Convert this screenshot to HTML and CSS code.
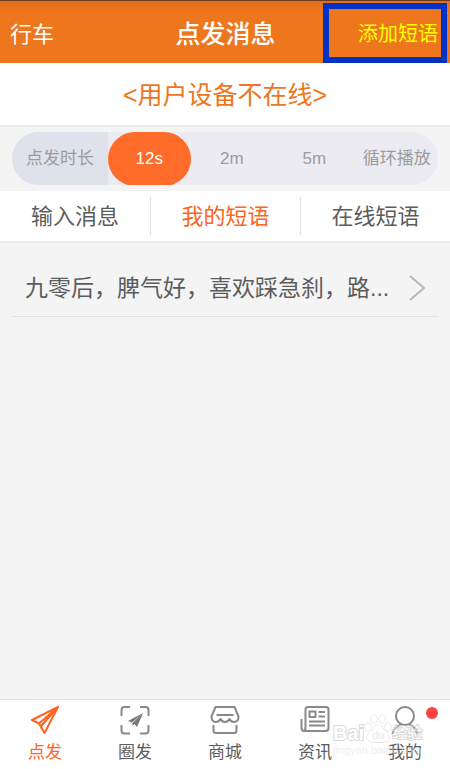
FILE: index.html
```html
<!DOCTYPE html>
<html lang="zh-CN">
<head>
<meta charset="utf-8">
<meta name="viewport" content="width=device-width, initial-scale=1">
<title>点发消息</title>
<link rel="stylesheet" href="styles.css">
</head>
<body>
<div class="app">
  <header class="topbar">
    <a class="topbar-back" href="#">行车</a>
    <h1 class="topbar-title">点发消息</h1>
    <button class="topbar-add" type="button">添加短语</button>
  </header>
  <p class="status">&lt;用户设备不在线&gt;</p>
  <section class="duration">
    <div class="pill">
      <span class="pill-label">点发时长</span>
      <button class="pill-option pill-option-active" type="button">12s</button>
      <button class="pill-option" type="button">2m</button>
      <button class="pill-option" type="button">5m</button>
      <button class="pill-option" type="button">循环播放</button>
    </div>
  </section>
  <nav class="tabs">
    <button class="tab" type="button">输入消息</button>
    <button class="tab tab-active" type="button">我的短语</button>
    <button class="tab" type="button">在线短语</button>
  </nav>
  <main class="phrases">
    <a class="phrase" href="#">
      <span class="phrase-text">九零后，脾气好，喜欢踩急刹，路...</span>
      <svg class="phrase-arrow" viewBox="0 0 16 26"><path d="M1 1L15 13L1 25"/></svg>
    </a>
  </main>
  <nav class="bottom">
    <a class="item item-active" href="#">
      <svg class="icon" viewBox="0 0 30 30"><path d="M28 2L2 15L9 18.5L14.500 28ZM28 2L9 18.500M28 2L11.500 20.500V24"/></svg>
      <span>点发</span>
    </a>
    <a class="item" href="#">
      <svg class="icon" viewBox="0 0 30 30"><path d="M1.500 11V5Q1.500 2 4.500 2H10M20 2H25.500Q28.500 2 28.500 5V11M28.500 20V25.500Q28.500 28.500 25.500 28.500H20M10 28.500H4.500Q1.500 28.500 1.500 25.500V20"/><path class="solid" d="M23 8L8 16L12 17.500ZM23 8L12.500 18V21L14.500 19L17 22Z"/></svg>
      <span>圈发</span>
    </a>
    <a class="item" href="#">
      <svg class="icon" viewBox="0 0 30 30"><path d="M5.500 2H24.500L28.500 11.500Q28.500 17 24 17Q21 17 19.500 14Q18 17 15 17Q12 17 10.500 14Q9 17 6 17Q1.500 17 1.500 11.500ZM6.500 10H23.500M3.500 20V25.500Q3.500 28 6 28H24Q26.500 28 26.500 25.500V20"/></svg>
      <span>商城</span>
    </a>
    <a class="item" href="#">
      <svg class="icon" viewBox="0 0 30 30"><path d="M5.500 22V4.500Q5.500 2 8 2H26Q28.500 2 28.500 4.500V23Q28.500 26 25.500 26H4.500Q1.500 26 1.500 23V14M5.500 22Q5.500 26 3.500 26M9.500 6.500H15.500V12H9.500ZM18.500 7H25M18.500 11.500H25M9 16.500H25M9 20.500H25"/></svg>
      <span>资讯</span>
    </a>
    <a class="item" href="#">
      <svg class="icon" viewBox="0 0 30 30"><circle cx="15" cy="11" r="9"/><path d="M11 19.500Q4 22 2.500 29M19 19.500Q26 22 27.500 29"/></svg>
      <span>我的</span>
      <i class="badge"></i>
    </a>
    <div class="mark" aria-hidden="true">
      <div class="mark-row">
        <span class="mark-bai">Bai</span>
        <svg class="paw" viewBox="0 0 28 30"><ellipse cx="4" cy="13" rx="3" ry="4"/><ellipse cx="10" cy="5" rx="3" ry="4"/><ellipse cx="18" cy="5" rx="3" ry="4"/><ellipse cx="24" cy="13" rx="3" ry="4"/><path d="M14 11Q17 11 19 15Q26 20 25 25Q23 29 14 28Q5 29 3 25Q2 20 9 15Q11 11 14 11Z"/><text x="14" y="25" text-anchor="middle">du</text></svg>
        <span class="mark-cn">经验</span>
      </div>
      <div class="mark-url">jingyan.baidu.com</div>
    </div>
  </nav>
</div>
</body>
</html>
```
FILE: styles.css
```css
* {
  box-sizing: border-box;
}

body {
  margin: 0;
  background: #f4f4f4;
  color: #5c5c5c;
  font-family: "Liberation Sans", "Noto Sans CJK SC", sans-serif;
}

button {
  margin: 0;
  padding: 0;
  border: 0;
  background: none;
  color: inherit;
  font: inherit;
}

a {
  color: inherit;
  text-decoration: none;
}

.app {
  display: flex;
  flex-direction: column;
  min-height: 100vh;
}

.topbar {
  display: grid;
  grid-template-columns: 1fr auto 1fr;
  align-items: center;
  height: 63px;
  padding: 2px 3px 0 10px;
  border-top: 1px solid #6b3c1c;
  background: linear-gradient(#e06e1b, #ee761c 10px);
  color: #fff;
}

.topbar-back {
  padding-bottom: 2px;
  font-size: 22px;
}

.topbar-title {
  margin: 0;
  padding: 0 6px 2px 0;
  font-size: 25px;
  font-weight: 500;
}

.topbar-add {
  justify-self: end;
  width: 124px;
  height: 60px;
  padding: 0 3px 2px 0;
  border: 6px solid #0232c4;
  color: #ff0;
  font-size: 20px;
  text-align: right;
}

.status {
  margin: 0;
  padding-top: 2px;
  border-bottom: 2px solid #ededed;
  background: #fff;
  color: #ee761c;
  font-size: 25px;
  line-height: 60px;
  text-align: center;
}

.duration {
  padding: 5px 12px 6px;
}

.pill {
  display: grid;
  grid-template-columns: 96px repeat(4, 1fr);
  height: 53px;
  overflow: hidden;
  border-radius: 27px;
  background: #ebebf1;
  color: #9c9c9f;
  font-size: 17px;
  line-height: 54px;
  text-align: center;
  white-space: nowrap;
}

.pill-label {
  background: #dfe2ea;
}

.pill-option-active {
  border-radius: 27px;
  background: #ff6b29;
  color: #fff;
}

.tabs {
  display: grid;
  grid-template-columns: repeat(3, 1fr);
  padding: 6px 0;
  border-bottom: 2px solid #ebebeb;
  background: #fff;
}

.tab {
  height: 38px;
  font-size: 22px;
  line-height: 40px;
}

.tab + .tab {
  border-left: 1px solid #e2e2e2;
}

.tab-active {
  color: #ff6420;
}

.phrases {
  flex: 1;
  padding: 0 12px;
}

.phrase {
  display: flex;
  align-items: center;
  justify-content: space-between;
  height: 74px;
  padding: 16px 13px 0;
  border-bottom: 1px solid #e2e2e2;
}

.phrase-text {
  overflow: hidden;
  font-size: 23px;
  line-height: 36px;
  text-overflow: ellipsis;
  white-space: nowrap;
}

.phrase-arrow {
  flex: none;
  width: 16px;
  height: 26px;
  fill: none;
  stroke: #b9b9b9;
  stroke-width: 2;
}

.bottom {
  position: relative;
  display: grid;
  grid-template-columns: repeat(5, 1fr);
  height: 70px;
  border-top: 1px solid #e2e2e2;
  background: #fff;
}

.item {
  position: relative;
  display: flex;
  flex-direction: column;
  align-items: center;
  gap: 6px;
  padding-top: 5px;
  font-size: 17px;
  line-height: 24px;
}

.item-active {
  color: #ff6420;
}

.icon {
  width: 30px;
  height: 30px;
  fill: none;
  stroke: #898989;
  stroke-width: 2;
  stroke-linejoin: round;
}

.item-active .icon {
  stroke: #ff6420;
}

.icon .solid {
  fill: #777;
  stroke: none;
}

.badge {
  position: absolute;
  top: 7px;
  right: 12px;
  width: 12px;
  height: 12px;
  border-radius: 50%;
  background: #ff4141;
}

.mark {
  position: absolute;
  top: 14px;
  right: 12px;
  width: 105px;
  color: #fff;
  opacity: 0.6;
  -webkit-text-stroke: 2px #c4c4c4;
  paint-order: stroke fill;
}

.mark-row {
  display: flex;
  align-items: flex-end;
  line-height: 22px;
}

.mark-bai {
  font-size: 20px;
  font-weight: bold;
}

.mark-cn {
  font-size: 15px;
}

.paw {
  flex: none;
  width: 28px;
  height: 30px;
  fill: #fff;
  stroke: #b4b4b4;
  font-size: 11px;
}

.paw text {
  fill: #d8d8d8;
  stroke: none;
  -webkit-text-stroke: 0;
}

.mark-url {
  color: #e4e4e4;
  font-size: 11px;
  line-height: 12px;
  -webkit-text-stroke: 0;
}
```
